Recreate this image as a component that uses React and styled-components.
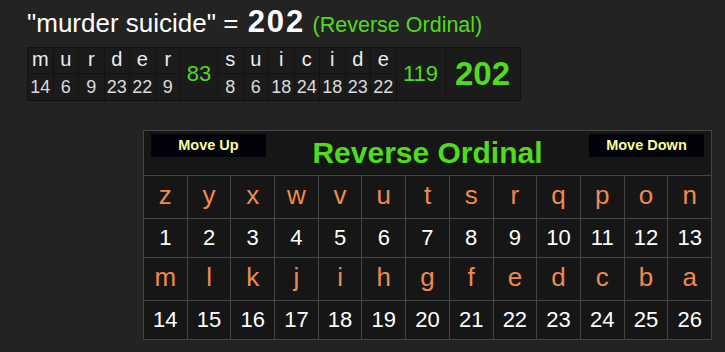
import React from 'react';
import styled, { createGlobalStyle } from 'styled-components';

const words = ['murder', 'suicide'];
const value = ch => 27 - (ch.charCodeAt(0) - 96);
const alphabet = 'zyxwvutsrqponmlkjihgfedcba'.split('');

const App = () => {
    const sums = words.map(w => w.split('').reduce((a, c) => a + value(c), 0));
    const total = sums.reduce((a, b) => a + b, 0);
    return (
        <Page>
            <GlobalStyle />
            <Title>
                "{words.join(' ')}" = <TitleTotal>{total}</TitleTotal>{' '}
                <CipherName>(Reverse Ordinal)</CipherName>
            </Title>

            <Breakdown>
                {words.map((w, i) => (
                    <React.Fragment key={w}>
                        {w.split('').map((c, j) => (
                            <LetterCol key={j}>
                                <TopLetter>{c}</TopLetter>
                                <TopNumber>{value(c)}</TopNumber>
                            </LetterCol>
                        ))}
                        <SumCell width={i === 0 ? 37 : 49}>{sums[i]}</SumCell>
                    </React.Fragment>
                ))}
                <TotalCell>{total}</TotalCell>
            </Breakdown>

            <Board>
                <BoardHeader>
                    <MoveButton>Move Up</MoveButton>
                    <BoardTitle>Reverse Ordinal</BoardTitle>
                    <MoveButton>Move Down</MoveButton>
                </BoardHeader>
                {[0, 13].map(start => (
                    <React.Fragment key={start}>
                        {alphabet.slice(start, start + 13).map(c => (
                            <Cell key={c} letter>{c}</Cell>
                        ))}
                        {alphabet.slice(start, start + 13).map((c, k) => (
                            <Cell key={c + 'n'}>{start + k + 1}</Cell>
                        ))}
                    </React.Fragment>
                ))}
            </Board>
        </Page>
    );
};

export default App;

const GlobalStyle = createGlobalStyle`
    body {
        margin: 0;
        background: #232323;
        font-family: "Liberation Sans", Arial, sans-serif;
    }
`;

const Page = styled.div`
    width: 725px;
    height: 352px;
    padding: 6px 0 0 27px;
    box-sizing: border-box;
    overflow: hidden;
`;

const Title = styled.div`
    color: #ffffff;
    font-size: 26px;
    line-height: 32px;
    height: 34px;
    white-space: nowrap;
`;

const TitleTotal = styled.span`
    font-weight: bold;
    font-size: 31px;
    letter-spacing: 2px;
    margin-left: 2px;
`;

const CipherName = styled.span`
    color: #4fdc1c;
    font-size: 21.5px;
`;

const Breakdown = styled.div`
    display: inline-flex;
    margin-top: 7px;
    background: #1b1b1b;
    border: 1px solid #121212;
    height: 52px;
`;

const LetterCol = styled.div`
    display: flex;
    flex-direction: column;
    width: 25.5px;
    border-right: 1px solid #121212;
    box-sizing: border-box;
`;

const TopLetter = styled.div`
    height: 26px;
    border-bottom: 1px solid #121212;
    box-sizing: border-box;
    color: #e6eef8;
    font-size: 20px;
    line-height: 22px;
    text-align: center;
`;

const TopNumber = styled.div`
    height: 26px;
    color: #dcdcdc;
    font-size: 18px;
    line-height: 26px;
    text-align: center;
`;

const SumCell = styled.div`
    width: ${p => p.width}px;
    display: flex;
    align-items: center;
    justify-content: center;
    border-right: 1px solid #121212;
    box-sizing: border-box;
    color: #4fdc1c;
    font-size: 22px;
`;

const TotalCell = styled.div`
    width: 74px;
    display: flex;
    align-items: center;
    justify-content: center;
    color: #4fdc1c;
    font-size: 33px;
    font-weight: bold;
`;

const Board = styled.div`
    display: grid;
    grid-template-columns: repeat(13, 1fr);
    grid-template-rows: 44px 42px 38px 42px 38px;
    gap: 1px;
    width: 567px;
    margin: 29px 0 0 116px;
    background: #454545;
    border: 1px solid #454545;
`;

const BoardHeader = styled.div`
    grid-column: 1 / -1;
    display: flex;
    align-items: center;
    justify-content: space-between;
    padding: 0 7px 0 7px;
    background: #161616;
`;

const MoveButton = styled.div`
    width: 115px;
    height: 23px;
    background: #02020a;
    color: #fbfb9a;
    font-size: 14.5px;
    font-weight: bold;
    line-height: 23px;
    text-align: center;
    margin-top: -15px;
`;

const BoardTitle = styled.div`
    color: #4fdc1c;
    font-size: 30px;
    font-weight: bold;
`;

const Cell = styled.div`
    background: #161616;
    display: flex;
    align-items: center;
    justify-content: center;
    color: ${p => (p.letter ? '#ef8a4e' : '#ffffff')};
    font-size: ${p => (p.letter ? '26px' : '22px')};
    padding-bottom: ${p => (p.letter ? '3px' : '0')};
`;
